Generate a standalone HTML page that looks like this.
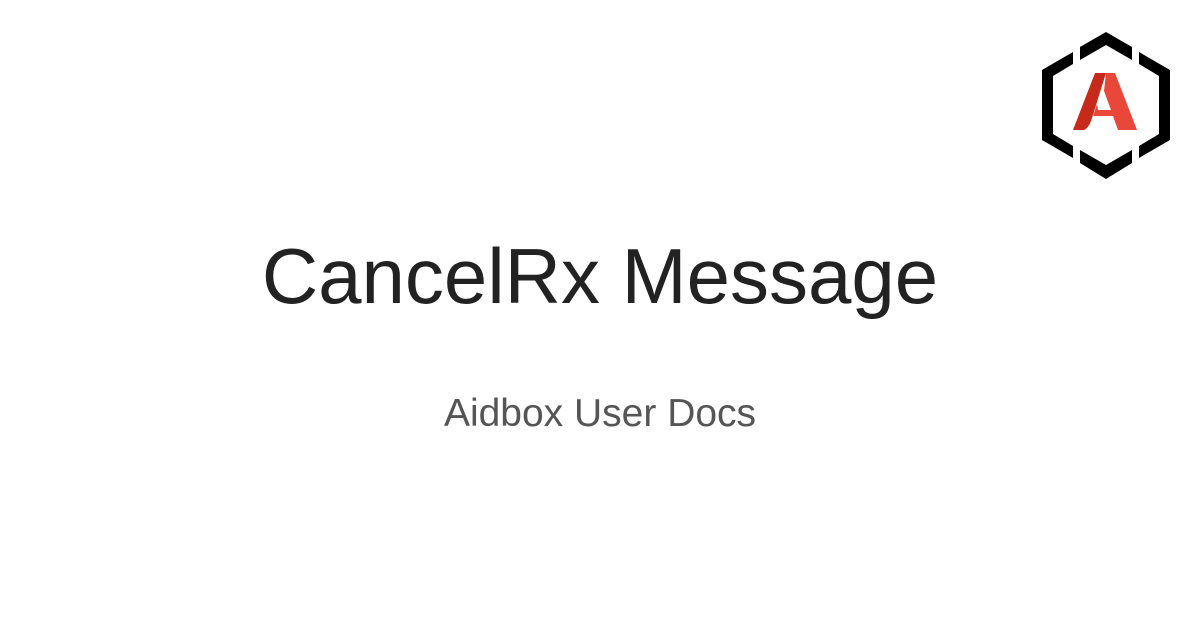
<!DOCTYPE html><html><head><style>
body{margin:0;width:1200px;height:630px;background:#fff;position:relative;overflow:hidden;font-family:"Liberation Sans",Roboto,sans-serif}
h1{position:absolute;top:231px;left:0;width:1200px;text-align:center;margin:0;font-weight:400;font-size:78px;color:#222}
p{position:absolute;top:392px;left:0;width:1200px;text-align:center;margin:0;font-size:39px;color:#555}
</style></head><body>
<svg style="position:absolute;left:0;top:0" width="1200" height="630">
<g fill="#000">
<polygon points="1080,47 1106,32 1132,47 1132,60 1106,45 1080,60"/>
<polygon points="1080,150 1106,165 1132,150 1132,163 1106,179 1080,163"/>
<polygon points="1073,52 1073,64 1053,76 1053,134 1073,146 1073,158 1042,140 1042,70"/>
<polygon points="1139,52 1139,64 1159,76 1159,134 1139,146 1139,158 1170,140 1170,70"/>
</g>
<path fill="#c62a1a" d="M1095,73 L1106,73 L1092,118 Q1089,128 1084,130 L1073,130 Z"/>
<path fill-rule="evenodd" fill="#e8473a" d="M1106,73 L1115,73 L1137,130 L1118,130 L1113,116 L1093,116 L1097,104 L1098,110 L1111,110 L1104,91 Z"/>
</svg>
<h1>CancelRx Message</h1>
<p>Aidbox User Docs</p>
</body></html>
